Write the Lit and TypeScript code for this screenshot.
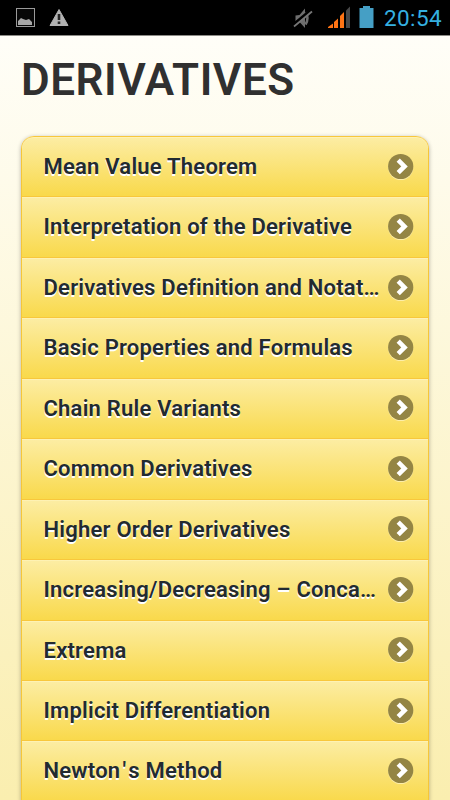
import { LitElement, html, css } from "lit";
import { customElement, property } from "lit/decorators.js";

const TOPICS = [
  "Mean Value Theorem",
  "Interpretation of the Derivative",
  "Derivatives Definition and Notat…",
  "Basic Properties and Formulas",
  "Chain Rule Variants",
  "Common Derivatives",
  "Higher Order Derivatives",
  "Increasing/Decreasing – Conca…",
  "Extrema",
  "Implicit Differentiation",
  "Newton's Method",
];

@customElement("status-bar")
class StatusBar extends LitElement {
  static styles = css`
    :host {
      display: flex;
      align-items: flex-start;
      justify-content: space-between;
      height: 36px;
      background: #000;
      border-bottom: 1px solid #8c8b86;
      box-sizing: border-box;
      font-family: Roboto, sans-serif;
    }
    .side { display: flex; height: 35px; }
    svg { display: block; }
    .clock {
      width: 66px;
      padding-left: 4px;
      font-size: 22.5px;
      line-height: 36px;
      color: #35b0e0;
      white-space: nowrap;
      letter-spacing: 0.4px;
    }
  `;
  render() {
    return html`
      <div class="side">
        <svg width="80" height="34" viewBox="0 0 80 34">
          <rect x="16.5" y="8.5" width="18" height="18" fill="#080808" stroke="#9a9a9a" />
          <path d="M18 25v-4l3-3 2 1 3 1 3-1 3 3v3z" fill="#a8a8a8" />
          <path d="M59 9.5L68 25.5H50z" fill="#b2b2b2" stroke="#b2b2b2" stroke-width="1" stroke-linejoin="round" />
          <path d="M57.7 14h2.6v6h-2.6zM57.7 21.5h2.6V24h-2.6z" fill="#252525" />
        </svg>
      </div>
      <div class="side">
        <svg width="90" height="34" viewBox="290 0 90 34">
          <path d="M295.5 15.5l4-.5 5.5-6.5v19.5l-5-5.5-4.5-.5z" fill="#6e6e6e" />
          <path d="M305.5 12.5q4 5.5 0 12" fill="none" stroke="#6e6e6e" stroke-width="2.5" />
          <path d="M293 25L310.5 10.5" stroke="#000" stroke-width="3" />
          <path d="M294 26.5L312 11.5" stroke="#777" stroke-width="1.7" />
          <path d="M328 28v-1l5-3.5V28zM334 28v-6l4-3.5V28z" fill="#ff7414" />
          <path d="M340 28V16l4-4v16z" fill="#ff7414" />
          <path d="M346 28V10.5l4-4v21.5z" fill="#484848" />
          <path d="M359.5 8h3.5V6h7v2h3.5v20h-14z" fill="#459fc5" />
        </svg>
        <div class="clock">20:54</div>
      </div>
    `;
  }
}

@customElement("topic-row")
class TopicRow extends LitElement {
  @property() label = "";

  static styles = css`
    :host {
      display: flex;
      align-items: center;
      box-sizing: border-box;
      height: 60.45px;
      padding: 0 14px 0 21.5px;
      border-top: 1px solid #f8c73c;
      background: linear-gradient(#fceda4, #f9d94b);
      box-shadow: inset 0 1px 0 rgba(255, 245, 190, 0.6);
      font-family: Roboto, sans-serif;
    }
    .label {
      flex: 1;
      margin-top: 0.6px;
      white-space: nowrap;
      font-size: 22px;
      font-weight: 600;
      letter-spacing: 0.23px;
      line-height: 32px;
      color: #222a31;
      text-shadow: 0 1.5px 0 #fff;
    }
    .apostrophe { margin: 0 2px; }
    svg { flex: none; display: block; }
  `;
  render() {
    const [head, tail] = this.label.split("'");
    return html`
      <div class="label">${head}${tail ? html`<span class="apostrophe">'</span>${tail}` : ""}</div>
      <svg width="26" height="28" viewBox="0 0 26 28">
        <circle cx="12.7" cy="14.6" r="12.5" fill="#fff" opacity="0.45" />
        <circle cx="12.7" cy="13.5" r="12.6" fill="#948544" />
        <path d="M10.2 7.2L16.5 13.4L10.2 19.6" fill="none" stroke="#fff" stroke-width="4.6" />
      </svg>
    `;
  }
}

@customElement("app-root")
class AppRoot extends LitElement {
  static styles = css`
    :host {
      display: block;
      height: 800px;
      overflow: hidden;
      background: linear-gradient(#fffef8 35px, #faeeaf 800px);
      font-family: Roboto, sans-serif;
    }
    h1 {
      box-sizing: border-box;
      height: 100px;
      margin: 0;
      padding: 17.6px 21px 0;
      font-size: 44px;
      font-weight: 600;
      letter-spacing: 0.55px;
      line-height: 52px;
      color: #303030;
    }
    .list {
      margin: 0 21px;
      border: 1px solid #f6c638;
      border-top: 0;
      border-radius: 13px 13px 0 0;
      overflow: hidden;
      box-shadow: 0 1px 4px rgba(0, 0, 0, 0.3);
    }
    topic-row:first-child { border-radius: 12px 12px 0 0; }
  `;
  render() {
    return html`
      <status-bar></status-bar>
      <h1>DERIVATIVES</h1>
      <div class="list">
        ${TOPICS.map((t) => html`<topic-row .label=${t}></topic-row>`)}
      </div>
    `;
  }
}
